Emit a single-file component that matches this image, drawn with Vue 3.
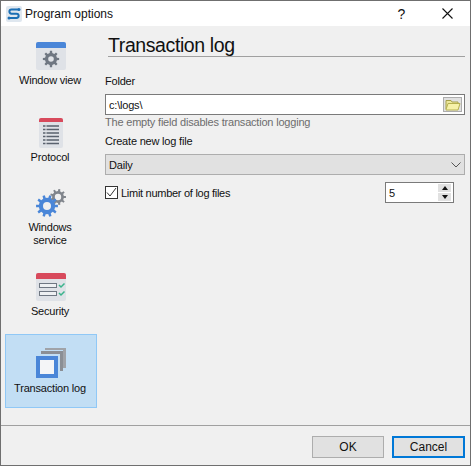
<template>
  <div class="window">
    <!-- title bar -->
    <div class="titlebar">
      <svg class="app-icon" width="16" height="16" viewBox="0 0 16 16">
        <rect x="0" y="0" width="16" height="16" rx="2" fill="#dfe7ef" />
        <path d="M13 3.5H5.5a1.7 1.7 0 0 0 0 4.2h5a1.7 1.7 0 0 1 0 4.300H3" fill="none" stroke="#1b6fb5" stroke-width="2" />
        <circle cx="13" cy="3.500" r="1.500" fill="#1b6fb5" />
        <circle cx="3" cy="12" r="1.500" fill="#1b6fb5" />
      </svg>
      <span class="title-text">Program options</span>
      <span class="help">?</span>
      <svg class="close" width="13" height="13" viewBox="0 0 13 13">
        <path d="M1.500 1.500l10 10M11.500 1.500l-10 10" stroke="#111" stroke-width="1.100" fill="none" />
      </svg>
    </div>

    <div class="body">
      <!-- left navigation -->
      <nav class="sidebar">
        <div class="nav-item">
          <svg width="30" height="28" viewBox="0 0 30 28">
            <rect x="0" y="0" width="30" height="28" rx="2" fill="#dfe2e7" />
            <path d="M0 2a2 2 0 0 1 2-2h26a2 2 0 0 1 2 2v4H0z" fill="#4a86d8" />
            <path :d="gear(15, 17, 2.800, 8.200, 8)" fill="#6f7782" fill-rule="evenodd" />
          </svg>
          <span>Window view</span>
        </div>

        <div class="nav-item tight">
          <svg width="24" height="30" viewBox="0 0 24 30">
            <rect x="0" y="0" width="24" height="30" rx="2" fill="#dfe2e7" />
            <path d="M0 2a2 2 0 0 1 2-2h20a2 2 0 0 1 2 2v2H0z" fill="#d84a5c" />
            <path d="M4 8h16M4 11.500h16M4 15h16M4 18.500h16M4 22h16M4 25.500h16" stroke="#5a626e" stroke-width="1.500" stroke-dasharray="2.500 1 12.500" />
          </svg>
          <span>Protocol</span>
        </div>

        <div class="nav-item tight">
          <svg width="30" height="30" viewBox="0 0 30 30">
            <path :d="gear(22, 9, 3.200, 8, 9)" fill="#80858c" fill-rule="evenodd" />
            <path :d="gear(11, 18, 4, 11, 10)" fill="#4a86d8" fill-rule="evenodd" />
          </svg>
          <span>Windows<br />service</span>
        </div>

        <div class="nav-item">
          <svg width="30" height="28" viewBox="0 0 30 28">
            <rect x="0" y="0" width="30" height="28" rx="2" fill="#dfe2e7" />
            <path d="M0 2a2 2 0 0 1 2-2h26a2 2 0 0 1 2 2v4H0z" fill="#d84a5c" />
            <rect x="3.500" y="10.500" width="17" height="4" fill="#eef0f2" stroke="#6f7782" />
            <rect x="3.500" y="18.500" width="17" height="4" fill="#eef0f2" stroke="#6f7782" />
            <path d="M23 12l2 2 3.500-3.500M23 20l2 2 3.500-3.500" stroke="#3bb48c" stroke-width="1.500" fill="none" />
          </svg>
          <span>Security</span>
        </div>

        <div class="nav-item active">
          <svg width="30" height="30" viewBox="0 0 30 30">
            <path d="M9 2V0h21v20h-3V2z" fill="#a0a3a8" />
            <path d="M5 6V3h22v20h-3V6z" fill="#8b8f95" />
            <rect x="0" y="8" width="22" height="22" fill="#4a86d8" />
            <rect x="4" y="12" width="14" height="14" fill="#f4f5f7" />
          </svg>
          <span>Transaction log</span>
        </div>
      </nav>

      <!-- settings panel -->
      <main class="panel">
        <h1 class="heading">Transaction log</h1>

        <label class="label first">Folder</label>
        <div class="input">
          <span>c:\logs\</span>
          <div class="folder-btn">
            <svg width="16" height="13" viewBox="0 0 16 13">
              <path d="M1 11V2.500h5l1 1.500h6v2" fill="#ece79c" stroke="#a5a04a" />
              <path d="M1 11.500l2-6h12l-2 6.500H1z" fill="#f6f1a8" stroke="#b5b050" />
            </svg>
          </div>
        </div>
        <div class="hint">The empty field disables transaction logging</div>

        <label class="label second">Create new log file</label>
        <div class="select">
          <span>Daily</span>
          <svg width="10" height="6" viewBox="0 0 10 6">
            <path d="M.5 .5l4.500 4.500L9.500 .5" stroke="#555" fill="none" />
          </svg>
        </div>

        <div class="limit-row">
          <div class="checkbox">
            <svg width="11" height="11" viewBox="0 0 11 11">
              <path d="M1 5.500l3 3.500 6-8" stroke="#333" fill="none" />
            </svg>
          </div>
          <span class="limit-label">Limit number of log files</span>
          <div class="spin">
            <span>5</span>
            <div class="spin-btns">
              <div class="spin-btn"><i class="arrow up"></i></div>
              <div class="spin-btn"><i class="arrow down"></i></div>
            </div>
          </div>
        </div>
      </main>
    </div>

    <!-- bottom buttons -->
    <div class="footer">
      <button class="btn">OK</button>
      <button class="btn default">Cancel</button>
    </div>
  </div>
</template>

<script setup>
// gear outline with a round hole in the middle
function gear(cx, cy, hole, r, teeth) {
  const inner = r * 0.74
  const step = (Math.PI * 2) / teeth
  let d = ''
  for (let i = 0; i < teeth; i++) {
    const a = i * step
    const pts = [
      [inner, a - step * 0.5],
      [inner, a - step * 0.27],
      [r, a - step * 0.17],
      [r, a + step * 0.17],
      [inner, a + step * 0.27]
    ]
    pts.forEach(([rad, ang], j) => {
      const x = (cx + rad * Math.cos(ang)).toFixed(2)
      const y = (cy + rad * Math.sin(ang)).toFixed(2)
      d += (i === 0 && j === 0 ? 'M' : 'L') + x + ' ' + y
    })
  }
  d += `Z M${cx + hole} ${cy}a${hole} ${hole} 0 1 0 ${-hole * 2} 0a${hole} ${hole} 0 1 0 ${hole * 2} 0Z`
  return d
}
</script>

<style>
html,
body {
  margin: 0;
  background: #f0f0f0;
}
</style>

<style scoped>
.window {
  width: 471px;
  height: 466px;
  box-sizing: border-box;
  border: 1px solid #6f6f6f;
  background: #f0f0f0;
  display: flex;
  flex-direction: column;
  font-family: "Liberation Sans", Arial, sans-serif;
  font-size: 11px;
  letter-spacing: -0.2px;
  color: #111;
}

.titlebar {
  height: 25px;
  background: #fff;
  display: flex;
  align-items: center;
  padding-left: 5px;
  flex: none;
}

.title-text {
  margin-left: 3px;
  font-size: 12px;
  letter-spacing: 0;
  flex: 1;
}

.help {
  font-size: 14px;
  margin-right: 36px;
}

.close {
  margin-right: 16px;
}

.body {
  flex: 1;
  display: flex;
  min-height: 0;
}

.sidebar {
  width: 92px;
  margin-left: 4px;
  padding-top: 1px;
  display: flex;
  flex-direction: column;
  gap: 3px;
  flex: none;
}

.nav-item {
  height: 74px;
  box-sizing: border-box;
  display: flex;
  flex-direction: column;
  align-items: center;
  justify-content: center;
  text-align: center;
  gap: 4px;
  line-height: 13px;
}

.nav-item span {
  margin-right: 2px;
}

.nav-item.tight {
  gap: 3px;
  padding-bottom: 1px;
}

.nav-item.active {
  background: #c2def4;
  border: 1px solid #90c8f6;
  margin-top: -1px;
}

.panel {
  flex: 1;
  padding: 8px 5px 0 8px;
  min-width: 0;
}

.heading {
  margin: 0 0 0 3px;
  font-size: 19.500px;
  letter-spacing: -0.4px;
  font-weight: 400;
  line-height: 22px;
  border-bottom: 1px solid #a0a0a0;
  color: #111;
}

.label {
  display: block;
  line-height: 14px;
}

.label.first {
  margin-top: 17px;
}

.label.second {
  margin-top: 5px;
}

.input,
.select {
  height: 21px;
  box-sizing: border-box;
  display: flex;
  align-items: center;
  justify-content: space-between;
  margin-top: 6px;
  padding-left: 3px;
}

.input {
  background: #fff;
  border: 1px solid #7a7a7a;
  padding-right: 2px;
}

.folder-btn {
  width: 19px;
  height: 15px;
  background: #e1e1e1;
  border: 1px solid #adadad;
  box-sizing: border-box;
  display: flex;
  align-items: center;
  justify-content: center;
}

.hint {
  color: #6d6d6d;
  line-height: 14px;
}

.select {
  background: #e1e1e1;
  border: 1px solid #adadad;
  padding-right: 3px;
}

.limit-row {
  display: flex;
  align-items: center;
  margin-top: 7px;
  height: 21px;
}

.checkbox {
  width: 13px;
  height: 13px;
  box-sizing: border-box;
  border: 1px solid #333;
  background: #fff;
  display: flex;
  align-items: center;
  justify-content: center;
}

.limit-label {
  margin-left: 3px;
  flex: 1;
  letter-spacing: -0.28px;
}

.spin {
  width: 69px;
  height: 21px;
  box-sizing: border-box;
  background: #fff;
  border: 1px solid #7a7a7a;
  margin-right: 11px;
  display: flex;
  align-items: center;
  justify-content: space-between;
  padding: 0 2px 0 3px;
}

.spin-btns {
  display: flex;
  flex-direction: column;
  gap: 1px;
}

.spin-btn {
  width: 13px;
  height: 8px;
  background: #e1e1e1;
  display: flex;
  align-items: center;
  justify-content: center;
}

.arrow {
  width: 0;
  height: 0;
  border-left: 3.500px solid transparent;
  border-right: 3.500px solid transparent;
}

.arrow.up {
  border-bottom: 4px solid #111;
}

.arrow.down {
  border-top: 4px solid #111;
}

.footer {
  height: 40px;
  box-sizing: border-box;
  border-top: 1px solid #a0a0a0;
  display: flex;
  justify-content: flex-end;
  align-items: flex-start;
  gap: 8px;
  padding: 10px 5px 0 0;
  flex: none;
}

.btn {
  width: 73px;
  height: 22px;
  box-sizing: border-box;
  background: #e1e1e1;
  border: 1px solid #adadad;
  font-family: inherit;
  font-size: 12px;
  color: #111;
  padding: 0;
}

.btn:first-child {
  width: 72px;
}

.btn.default {
  border: 2px solid #0078d7;
}
</style>
